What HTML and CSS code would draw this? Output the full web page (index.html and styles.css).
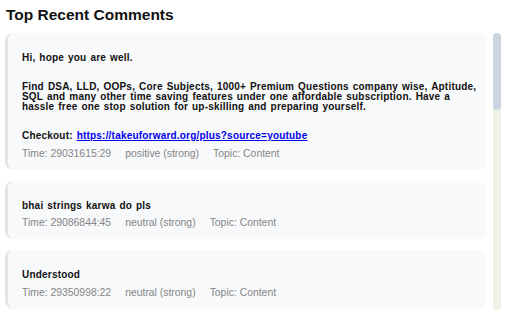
FILE: index.html
```html
<html>
  <head>
    <title>Top Recent Comments</title>
    <link rel="stylesheet" href="styles.css">
  </head>
  <body>
    <div class="panel">
      <h2 class="title">Top Recent Comments</h2>
      <div class="list-wrap">
        <div class="list">
          <div class="card">
            <div class="text">
              <p>Hi, hope you are well.</p>
              <p>Find DSA, LLD, OOPs, Core Subjects, 1000+ Premium Questions company wise, Aptitude, SQL and many other time saving features under one affordable subscription. Have a hassle free one stop solution for up-skilling and preparing yourself.</p>
              <p>Checkout: <a href="#">https://takeuforward.org/plus?source=youtube</a></p>
            </div>
            <div class="meta">
              <span>Time: 29031615:29</span>
              <span>positive (strong)</span>
              <span>Topic: Content</span>
            </div>
          </div>
          <div class="card">
            <div class="text"><p>bhai strings karwa do pls</p></div>
            <div class="meta">
              <span>Time: 29086844:45</span>
              <span>neutral (strong)</span>
              <span>Topic: Content</span>
            </div>
          </div>
          <div class="card">
            <div class="text"><p>Understood</p></div>
            <div class="meta">
              <span>Time: 29350998:22</span>
              <span>neutral (strong)</span>
              <span>Topic: Content</span>
            </div>
          </div>
        </div>
        <div class="scrollbar"><div class="thumb"></div></div>
      </div>
    </div>
  </body>
</html>
```

FILE: styles.css
```css
body {
  margin: 0;
  background: #ffffff;
  font-family: "Liberation Sans", Arial, sans-serif;
  color: #111111;
}
.panel {
  padding: 5px 11px 0 5px;
}
.title {
  margin: 0 0 9px 1px;
  font-size: 15.5px;
  line-height: 19px;
  font-weight: bold;
  color: #111111;
}
.list-wrap {
  display: flex;
  gap: 7px;
}
.list {
  flex: 1;
  height: 277px;
  overflow: hidden;
}
.scrollbar {
  width: 8px;
  height: 277px;
  background: #eff2e6;
  border-radius: 4px;
}
.thumb {
  height: 77px;
  background: #cbd4e0;
  border-radius: 4px;
}
.card {
  background: #f8f9fb;
  border-left: 3px solid #e3e5e9;
  border-radius: 8px;
  padding: 20px 8px 10px 14px;
  margin-bottom: 11px;
}
.text {
  margin: 0 0 7px 0;
  font-size: 10px;
  line-height: 9.8px;
  font-weight: bold;
  letter-spacing: 0.2px;
  word-spacing: 1px;
}
.text p {
  margin: 0 0 19.3px 0;
}
.text p:last-child {
  margin-bottom: 0;
}
.text a {
  color: #0000ee;
}
.meta {
  display: flex;
  gap: 14px;
  font-size: 10.4px;
  line-height: 12px;
  color: #858585;
}
```
